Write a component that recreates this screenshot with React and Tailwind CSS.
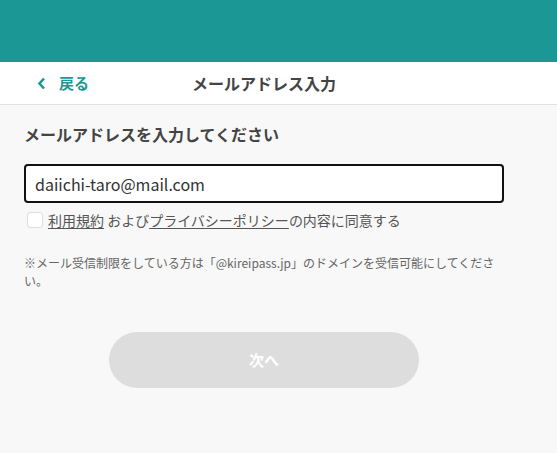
import { useState } from 'react';

const FONT = { fontFamily: '"Noto Sans CJK JP", "Noto Sans", sans-serif' };

export default function App() {
  const [email, setEmail] = useState('daiichi-taro@mail.com');

  return (
    <div className="min-h-[453px] bg-[#f8f8f8] text-[#444]" style={FONT}>
      {/* Top band */}
      <div className="h-[62px] bg-[#1b9896]" />

      {/* Nav */}
      <header className="h-[43px] bg-white border-b border-[#e3e3e3]">
        <div className="w-[480px] ml-6 h-full grid grid-cols-[1fr_auto_1fr] items-center">
          <button className="flex items-center gap-[13px] pl-[13px] text-[15px] font-bold text-[#1b9896]">
            <svg width="9" height="13" viewBox="0 0 9 13" fill="none">
              <path d="M7 1.5L2.5 6.5L7 11.5" stroke="#1b9896" strokeWidth="2.6" />
            </svg>
            戻る
          </button>
          <h1 className="text-base font-bold text-[#444]">メールアドレス入力</h1>
          <div />
        </div>
      </header>

      {/* Body */}
      <main className="w-[480px] ml-6 pt-[17px]">
        <p className="text-base font-bold leading-6">メールアドレスを入力してください</p>

        <input
          value={email}
          onChange={(e) => setEmail(e.target.value)}
          className="mt-[18px] w-[480px] h-[39px] bg-white border-2 border-[#111] rounded-[4px] px-[9px] text-base text-[#333] outline-none"
          style={FONT}
        />

        <label className="mt-[7px] flex items-center gap-[5px] text-sm text-[#555]">
          <span className="ml-[3px] w-4 h-4 rounded-[3px] border border-[#ddd] bg-white" />
          <span>
            <span className="underline underline-offset-2">利用規約</span> および
            <span className="underline underline-offset-2">プライバシーポリシー</span>の内容に同意する
          </span>
        </label>

        <p className="mt-[24px] text-xs leading-[18px] text-[#666] pr-1">
          ※メール受信制限をしている方は「@kireipass.jp」のドメインを受信可能にしてください。
        </p>

        <div className="mt-[42px] flex justify-center">
          <button className="w-[310px] h-[56px] rounded-full bg-[#dddddd] text-white text-[15px] font-bold">
            次へ
          </button>
        </div>
      </main>
    </div>
  );
}
